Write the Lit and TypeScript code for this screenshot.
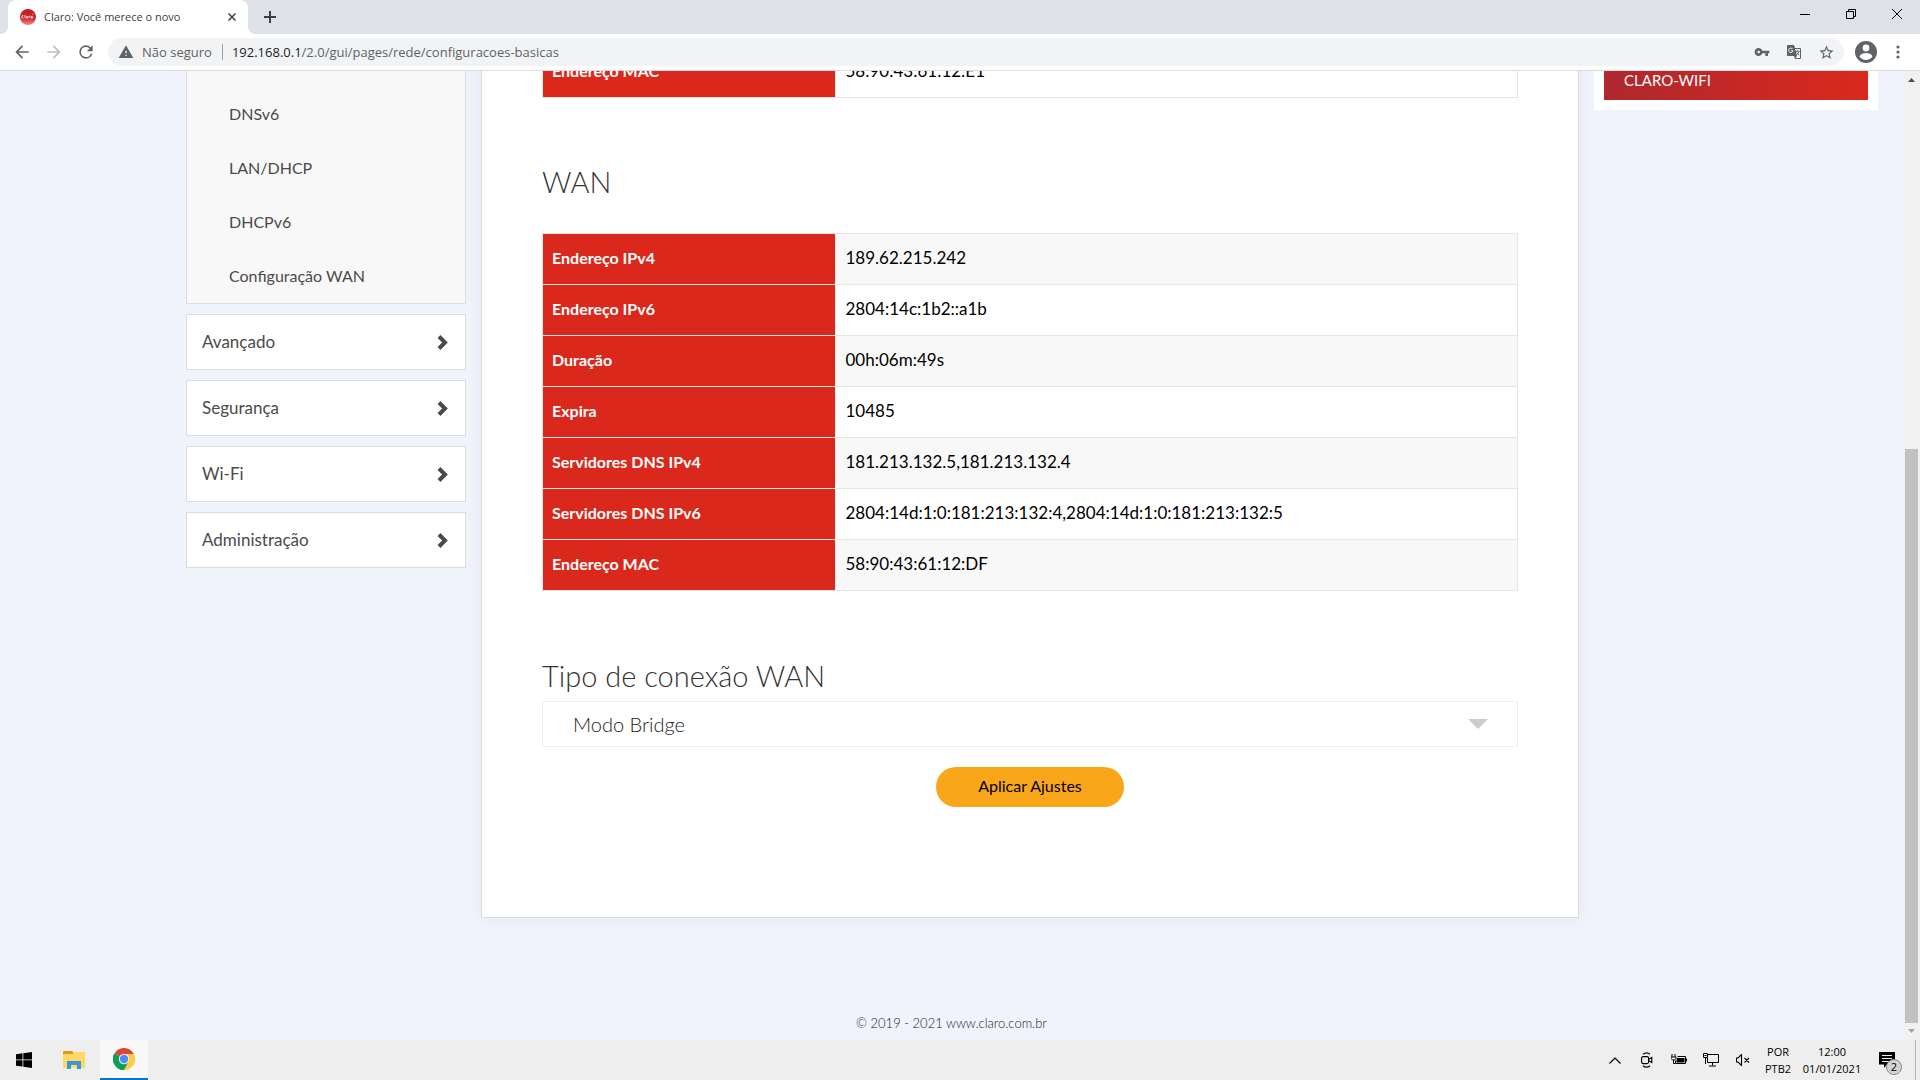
import { LitElement, html, css } from "lit";
import { customElement } from "lit/decorators.js";

@customElement("browser-bar")
class BrowserBar extends LitElement {
  static styles = css`
    :host { display: block; font-family: "Open Sans", "Noto Sans", sans-serif; color: #3c4043; }
    * { box-sizing: border-box; }
    svg { display: block; flex: none; }
    button { border: 0; padding: 0; margin: 0; background: none; color: inherit; display: grid; place-items: center; }
    .strip { height: 34px; background: #dee1e6; display: flex; padding-left: 8px; }
    .tab { position: relative; width: 240px; background: #fff; border-radius: 8px 8px 0 0; display: flex; align-items: center; padding: 0 8px 0 12px; gap: 8px; }
    .tab::before, .tab::after { content: ""; position: absolute; bottom: 0; width: 8px; height: 8px; }
    .tab::before { left: -8px; background: radial-gradient(circle at 0 0, transparent 8px, #fff 8px); }
    .tab::after { right: -8px; background: radial-gradient(circle at 100% 0, transparent 8px, #fff 8px); }
    .title { flex: 1; font-size: 11px; line-height: 16px; white-space: nowrap; }
    .small { width: 16px; height: 16px; }
    .plus { width: 28px; margin-left: 8px; }
    .window { margin-left: auto; display: flex; height: 28px; color: #000; }
    .window button { width: 46px; }
    .toolbar { height: 37px; background: #fff; border-bottom: 1px solid #d9dbdf; display: flex; align-items: center; padding: 0 12px 0 6px; color: #5f6368; }
    .nav { width: 32px; height: 32px; }
    .off { color: #bcbec1; }
    .box { flex: 1; height: 28px; border-radius: 14px; background: #f1f3f4; display: flex; align-items: center; padding: 0 10px; margin-left: 6px; font-size: 13px; line-height: 20px; }
    .warn { display: flex; align-items: center; gap: 8px; padding-right: 10px; margin-right: 9px; border-right: 1px solid #9aa0a6; height: 16px; white-space: nowrap; color: #5f6368; }
    .address { flex: 1; white-space: nowrap; }
    .host { color: #202124; }
    .box button { width: 32px; height: 28px; }
    .box button:last-child { margin-right: -8px; }
    .avatar { width: 44px; height: 32px; }
    .dots { width: 20px; height: 32px; }
  `;

  render() {
    return html`
      <div class="strip">
        <div class="tab">
          <svg width="16" height="16" viewBox="0 0 16 16">
            <defs><linearGradient id="ball" x1="0" y1="0" x2="0" y2="1"><stop offset="0" stop-color="#b5231f"/><stop offset=".55" stop-color="#d3232a"/><stop offset="1" stop-color="#ee8b86"/></linearGradient></defs>
            <circle cx="8" cy="8" r="8" fill="url(#ball)"/>
            <path d="M3.400 6.700a1.200 1.200 0 1 0 0 2.200M5 6v3M6.400 7.500h1.300v1.500H6.400zM9 9V7.300h1M11 7.400h1.400V9H11zM12.500 5.500l1-1" fill="none" stroke="#fff" stroke-width=".8"/>
          </svg>
          <span class="title">Claro: Você merece o novo</span>
          <button class="small" aria-label="Fechar guia"><svg width="10" height="10" viewBox="0 0 10 10"><path d="M1.500 1.500l7 7m0-7l-7 7" stroke="currentColor" stroke-width="1.500"/></svg></button>
        </div>
        <button class="plus" aria-label="Nova guia"><svg width="12" height="12" viewBox="0 0 12 12"><path d="M6 0v12M0 6h12" stroke="currentColor" stroke-width="2"/></svg></button>
        <div class="window">
          <button aria-label="Minimizar"><svg width="10" height="10" viewBox="0 0 10 10"><path d="M0 5.500h10" stroke="#000"/></svg></button>
          <button aria-label="Restaurar"><svg width="10" height="10" viewBox="0 0 10 10"><path d="M.5 2.500h7v7h-7zM2.500 2.500v-2h7v7h-2" fill="none" stroke="#000"/></svg></button>
          <button aria-label="Fechar"><svg width="10" height="10" viewBox="0 0 10 10"><path d="M0 0l10 10M10 0L0 10" stroke="#000"/></svg></button>
        </div>
      </div>
      <div class="toolbar">
        <button class="nav" aria-label="Voltar"><svg width="20" height="20" viewBox="0 0 24 24"><path d="M20 11H7.830l5.590-5.590L12 4l-8 8 8 8 1.410-1.410L7.830 13H20z" fill="currentColor"/></svg></button>
        <button class="nav off" aria-label="Avançar"><svg width="20" height="20" viewBox="0 0 24 24"><path d="M12 4l-1.410 1.410L16.170 11H4v2h12.170l-5.580 5.590L12 20l8-8z" fill="currentColor"/></svg></button>
        <button class="nav" aria-label="Recarregar"><svg width="20" height="20" viewBox="0 0 24 24"><path d="M17.650 6.350A7.960 7.960 0 0 0 12 4a8 8 0 1 0 7.730 10h-2.080A6 6 0 1 1 12 6c1.660 0 3.140.69 4.220 1.780L13 11h7V4z" fill="currentColor"/></svg></button>
        <div class="box">
          <span class="warn">
            <svg width="16" height="16" viewBox="0 0 24 24"><path d="M1 21h22L12 2zM13 18h-2v-2h2zm0-4h-2v-4h2z" fill="currentColor"/></svg>
            Não seguro
          </span>
          <span class="address"><span class="host">192.168.0.1</span>/2.0/gui/pages/rede/configuracoes-basicas</span>
          <button aria-label="Senhas"><svg width="16" height="16" viewBox="0 0 24 24"><path d="M12.650 10A5.990 5.990 0 0 0 7 6a6 6 0 1 0 5.650 8H17v4h4v-4h2v-4zM7 14a2 2 0 1 1 0-4 2 2 0 0 1 0 4z" fill="currentColor"/></svg></button>
          <button aria-label="Traduzir"><svg width="16" height="16" viewBox="0 0 16 16"><path d="M2 1h6l1 3h5a1 1 0 0 1 1 1v9a1 1 0 0 1-1 1H9l-1-3H2a1 1 0 0 1-1-1V2a1 1 0 0 1 1-1z" fill="currentColor"/><path d="M9.300 5H14v9H9.500l1.500-2z" fill="#f1f3f4"/><path d="M9.800 7.300h3.900M11.700 6.300v1M13 7.500c-.4 1.500-1.300 2.600-2.500 3.300M10.800 8.300c.6 1.300 1.400 2.200 2.500 2.900" fill="none" stroke-width=".9" stroke="#5f6368"/><path d="M6.700 5.100A2.200 2.200 0 1 0 7 6.800H5" fill="none" stroke="#f1f3f4"/></svg></button>
          <button aria-label="Favoritar"><svg width="17" height="17" viewBox="0 0 24 24"><path d="M22 9.240l-7.190-.62L12 2 9.190 8.630 2 9.240l5.460 4.730L5.820 21 12 17.270 18.180 21l-1.630-7.030zM12 15.400l-3.760 2.270 1-4.280-3.320-2.880 4.380-.38L12 6.100l1.710 4.040 4.380.38-3.320 2.880 1 4.280z" fill="currentColor"/></svg></button>
        </div>
        <button class="avatar" aria-label="Perfil"><svg width="22" height="22" viewBox="0 0 22 22"><circle cx="11" cy="11" r="11" fill="currentColor"/><circle cx="11" cy="7" r="3.400" fill="#fff"/><path d="M4.500 15.500c1-2.600 4-3.500 6.500-3.500s5.500.9 6.500 3.500c-1.500 2.200-3.900 3.500-6.500 3.500s-5-1.300-6.500-3.500z" fill="#fff"/></svg></button>
        <button class="dots" aria-label="Menu"><svg width="4" height="14" viewBox="0 0 4 14"><circle cx="2" cy="2" r="1.600" fill="currentColor"/><circle cx="2" cy="7" r="1.600" fill="currentColor"/><circle cx="2" cy="12" r="1.600" fill="currentColor"/></svg></button>
      </div>
    `;
  }
}

@customElement("task-bar")
class TaskBar extends LitElement {
  static styles = css`
    :host { display: flex; height: 40px; background: #eee; font-family: "Open Sans", "Noto Sans", sans-serif; color: #000; }
    * { box-sizing: border-box; }
    svg { display: block; }
    button { border: 0; padding: 0; margin: 0; background: none; color: inherit; font: inherit; font-size: 11px; line-height: 17px; display: grid; place-items: center; align-content: center; }
    .app { width: 50px; }
    .start { width: 48px; }
    .files { width: 52px; }
    .on { width: 48px; background: #f8f8f8; border-bottom: 2px solid #0078d7; }
    .tray { margin-left: auto; display: flex; padding-right: 4px; border-right: 1px solid #b4b4b4; margin-right: 4px; }
    .tray .icon { width: 32px; }
    .lang { width: 38px; }
    .clock { width: 70px; }
    .note { width: 44px; padding-right: 4px; position: relative; }
    .badge { position: absolute; left: 19px; top: 19px; width: 16px; height: 16px; border-radius: 50%; background: #d4d4d4; border: 1px solid #8a8a8a; font-size: 11px; line-height: 14px; }
  `;

  render() {
    return html`
      <button class="app start" aria-label="Iniciar"><svg width="16" height="16" viewBox="0 0 16 16"><path d="M0 2.200L6.500 1.300V7.500H0zM7.300 1.200L16 0v7.500H7.300zM0 8.300h6.500v6.300L0 13.700zM7.300 8.300H16V16l-8.700-1.200z"/></svg></button>
      <button class="app files" aria-label="Explorador de Arquivos"><svg width="22" height="18" viewBox="0 0 22 18"><path d="M0 1a1 1 0 0 1 1-1h8l1 1h12v16H0z" fill="#ffd868"/><path d="M1 0h8l1 1v2H0V1z" fill="#dc9a0c"/><path d="M0 3h22v14H0z" fill="#ffd868"/><path d="M4 18v-8h14v8h-4v-4H8v4z" fill="#3a96dd"/></svg></button>
      <button class="app on" aria-label="Google Chrome"><svg width="22" height="22" viewBox="0 0 22 22"><path d="M11 11L1.470 5.500A11 11 0 0 1 20.530 5.500z" fill="#db4437"/><path d="M11 11L20.530 5.500A11 11 0 0 1 11 22z" fill="#ffcd40"/><path d="M11 11v11A11 11 0 0 1 1.470 5.500z" fill="#0f9d58"/><path d="M11 6h9.800l-.27-.5L11 5z" fill="#db4437"/><path d="M11 6h9.800A11 11 0 0 1 11 22l4.300-8.500z" fill="#ffcd40"/><path d="M6.700 13.500L1.470 5.500A11 11 0 0 0 11 22l4-7.500z" fill="#0f9d58"/><circle cx="11" cy="11" r="5.200" fill="#f1f1f1"/><circle cx="11" cy="11" r="4.200" fill="#4c8bf5"/></svg></button>
      <div class="tray">
        <button class="icon" aria-label="Mostrar ícones ocultos"><svg width="12" height="7" viewBox="0 0 12 7"><path d="M.5 6.500L6 1l5.500 5.500" fill="none" stroke="#000" stroke-width="1.200"/></svg></button>
        <button class="icon" aria-label="Reunir agora"><svg width="12" height="16" viewBox="0 0 12 16"><g fill="none" stroke="#000" stroke-width="1.100"><path d="M2 2.300Q5.500-.5 9 2.300M2 13.700q3.500 2.800 7 0"/><rect x=".6" y="4.600" width="7" height="7" rx="1.500"/><path d="M7.800 7.200l3-1.700v5l-3-1.700"/></g></svg></button>
        <button class="icon" aria-label="Bateria"><svg width="16" height="12" viewBox="0 0 16 12"><path d="M1 0v3M4 0v3M0 3h5v1.500L3.500 6h-2L0 4.500zM2.500 6v3.500H4" fill="none" stroke="#000"/><path d="M6.500 2.500h8v7h-10v-3" fill="none" stroke="#000"/><path d="M6 4h7.500v4.500H5.500V6.500zM15 4.500h1v3h-1z"/></svg></button>
        <button class="icon" aria-label="Rede"><svg width="16" height="14" viewBox="0 0 16 14"><path d="M5 1.500h10.500v8H4.500V5M9.500 9.500v3M6 13h7M.5.500h4v4h-4zM2.500 4.500V11M1.500 2.500h2" fill="none" stroke="#000"/></svg></button>
        <button class="icon" aria-label="Volume"><svg width="14" height="12" viewBox="0 0 14 12"><path d="M.5 4v4H2l3.500 3.500V.5L2 4zM8.500 4l4.500 4.500M13 4L8.500 8.500" fill="none" stroke="#000" stroke-width="1.100"/></svg></button>
        <button class="lang"><span>POR</span><span>PTB2</span></button>
        <button class="clock"><span>12:00</span><span>01/01/2021</span></button>
        <button class="note" aria-label="Notificações">
          <svg width="16" height="16" viewBox="0 0 16 16"><path d="M0 0h16v12.500H8L5 16v-3.500H0z"/><path d="M3 3.500h10M3 6.500h10M3 9.500h7" stroke="#eee"/></svg>
          <span class="badge">2</span>
        </button>
      </div>
    `;
  }
}

@customElement("app-root")
class AppRoot extends LitElement {
  static styles = css`
    :host { display: flex; flex-direction: column; height: 100vh; overflow: hidden; font-family: Lato, "Open Sans", sans-serif; }
    * { box-sizing: border-box; }
    .view { flex: 1; min-height: 0; display: flex; background: #f0f3fc; }
    .scrolled { flex: 1; min-width: 0; overflow: hidden; }
    .page { margin-top: -25px; padding: 0 25px 0 186px; display: flex; align-items: flex-start; gap: 15px; }
    .side { width: 280px; flex: none; display: flex; flex-direction: column; gap: 10px; }
    .sub { margin: 0; padding: 41px 42px 0; list-style: none; background: #f8f8f8; border: 1px solid #dfdbdb; border-top: 0; }
    .sub a { display: block; height: 54px; line-height: 54px; font-size: 16px; color: #4a4a4a; text-decoration: none; }
    .group { height: 56px; border: 1px solid #dfdbdb; background: #fff; display: flex; align-items: center; justify-content: space-between; padding: 0 17px 0 15px; font: inherit; font-size: 17px; line-height: 20px; color: #4a4a4a; }
    .card { flex: 1; min-width: 0; background: #fff; border: 1px solid #dfdcdc; border-top: 0; padding: 0 60px 110px; box-shadow: 0 0 16px rgba(0, 0, 0, 0.05); }
    table { width: 100%; table-layout: fixed; border-collapse: collapse; line-height: 24px; }
    th, td { height: 51px; padding: 0 10px 3px; border: 1px solid #e6e6e6; text-align: left; }
    th { width: 30%; background: #da291c; color: #fff; font-size: 16px; font-weight: 700; padding: 0 9px 3px; }
    td { color: #000; font-size: 17px; }
    tr:nth-child(odd) td { background: #f8f8f8; }
    .first tr td { background: #fff; }
    h2, .heading { display: block; margin: 0; font-size: 29px; line-height: 36px; font-weight: 300; color: #333; }
    h2 { padding: 66px 0 33px; }
    .heading { padding-top: 67px; }
    .choice { display: grid; margin-top: 7px; }
    .choice select, .choice svg { grid-area: 1 / 1; }
    .choice svg { justify-self: end; align-self: center; margin-right: 30px; pointer-events: none; }
    select { appearance: none; width: 100%; height: 46px; margin: 0; padding: 0 60px 0 30px; border: 1px solid #efefef; border-radius: 0; background: #fff; font: inherit; font-size: 20px; font-weight: 300; color: #222; }
    .apply { display: block; margin: 20px auto 0; width: 188px; height: 40px; padding: 0 0 4px; border: 0; border-radius: 20px; background: #faa61a; font: inherit; font-size: 16px; color: #000; }
    .wifi { width: 284px; flex: none; background: #fff; padding: 0 10px 10px; }
    .ssid { padding: 22px 20px 8px; height: 54px; line-height: 24px; font-size: 15px; font-weight: 400; color: #fff; background: linear-gradient(90deg, #af272f, #da291c); }
    footer { padding-top: 95px; text-align: center; font-size: 13px; line-height: 20px; font-weight: 300; color: #222; }
    .bar { width: 17px; flex: none; background: #f1f1f1; display: flex; flex-direction: column; align-items: center; }
    .bar svg { display: block; flex: none; }
    .before { flex: 361; }
    .thumb { flex: 574; width: 13px; background: #c1c1c1; }
  `;

  private groups = ["Avançado", "Segurança", "Wi-Fi", "Administração"];
  private links = ["DNSv6", "LAN/DHCP", "DHCPv6", "Configuração WAN"];
  private wan = [
    ["Endereço IPv4", "189.62.215.242"],
    ["Endereço IPv6", "2804:14c:1b2::a1b"],
    ["Duração", "00h:06m:49s"],
    ["Expira", "10485"],
    ["Servidores DNS IPv4", "181.213.132.5,181.213.132.4"],
    ["Servidores DNS IPv6", "2804:14d:1:0:181:213:132:4,2804:14d:1:0:181:213:132:5"],
    ["Endereço MAC", "58:90:43:61:12:DF"],
  ];

  render() {
    return html`
      <browser-bar></browser-bar>
      <div class="view">
        <div class="scrolled">
          <div class="page">
            <nav class="side">
              <ul class="sub">
                ${this.links.map((t) => html`<li><a href="#">${t}</a></li>`)}
              </ul>
              ${this.groups.map((t) => html`
                <button class="group">${t}
                  <svg width="11" height="15" viewBox="0 0 11 15"><path d="M2 1.500l6 6-6 6" fill="none" stroke="#4a4a4a" stroke-width="4"/></svg>
                </button>`)}
            </nav>
            <main class="card">
              <table class="first"><tbody><tr><th scope="row">Endereço MAC</th><td>58:90:43:61:12:E1</td></tr></tbody></table>
              <h2>WAN</h2>
              <table><tbody>
                ${this.wan.map(([k, v]) => html`<tr><th scope="row">${k}</th><td>${v}</td></tr>`)}
              </tbody></table>
              <label class="heading" for="mode">Tipo de conexão WAN</label>
              <div class="choice">
                <select id="mode"><option>Modo Bridge</option></select>
                <svg width="20" height="10" viewBox="0 0 20 10"><path d="M0 0h20L10 10z" fill="#ccc"/></svg>
              </div>
              <button class="apply">Aplicar Ajustes</button>
            </main>
            <aside class="wifi"><div class="ssid">CLARO-WIFI</div></aside>
          </div>
          <footer>© 2019 - 2021 www.claro.com.br</footer>
        </div>
        <div class="bar">
          <svg width="17" height="17" viewBox="0 0 17 17"><path d="M5 11h7L8.500 7z" fill="#505050"/></svg>
          <div class="before"></div>
          <div class="thumb"></div>
          <svg width="17" height="17" viewBox="0 0 17 17"><path d="M5 6h7l-3.500 4z" fill="#a3a3a3"/></svg>
        </div>
      </div>
      <task-bar></task-bar>
    `;
  }
}
